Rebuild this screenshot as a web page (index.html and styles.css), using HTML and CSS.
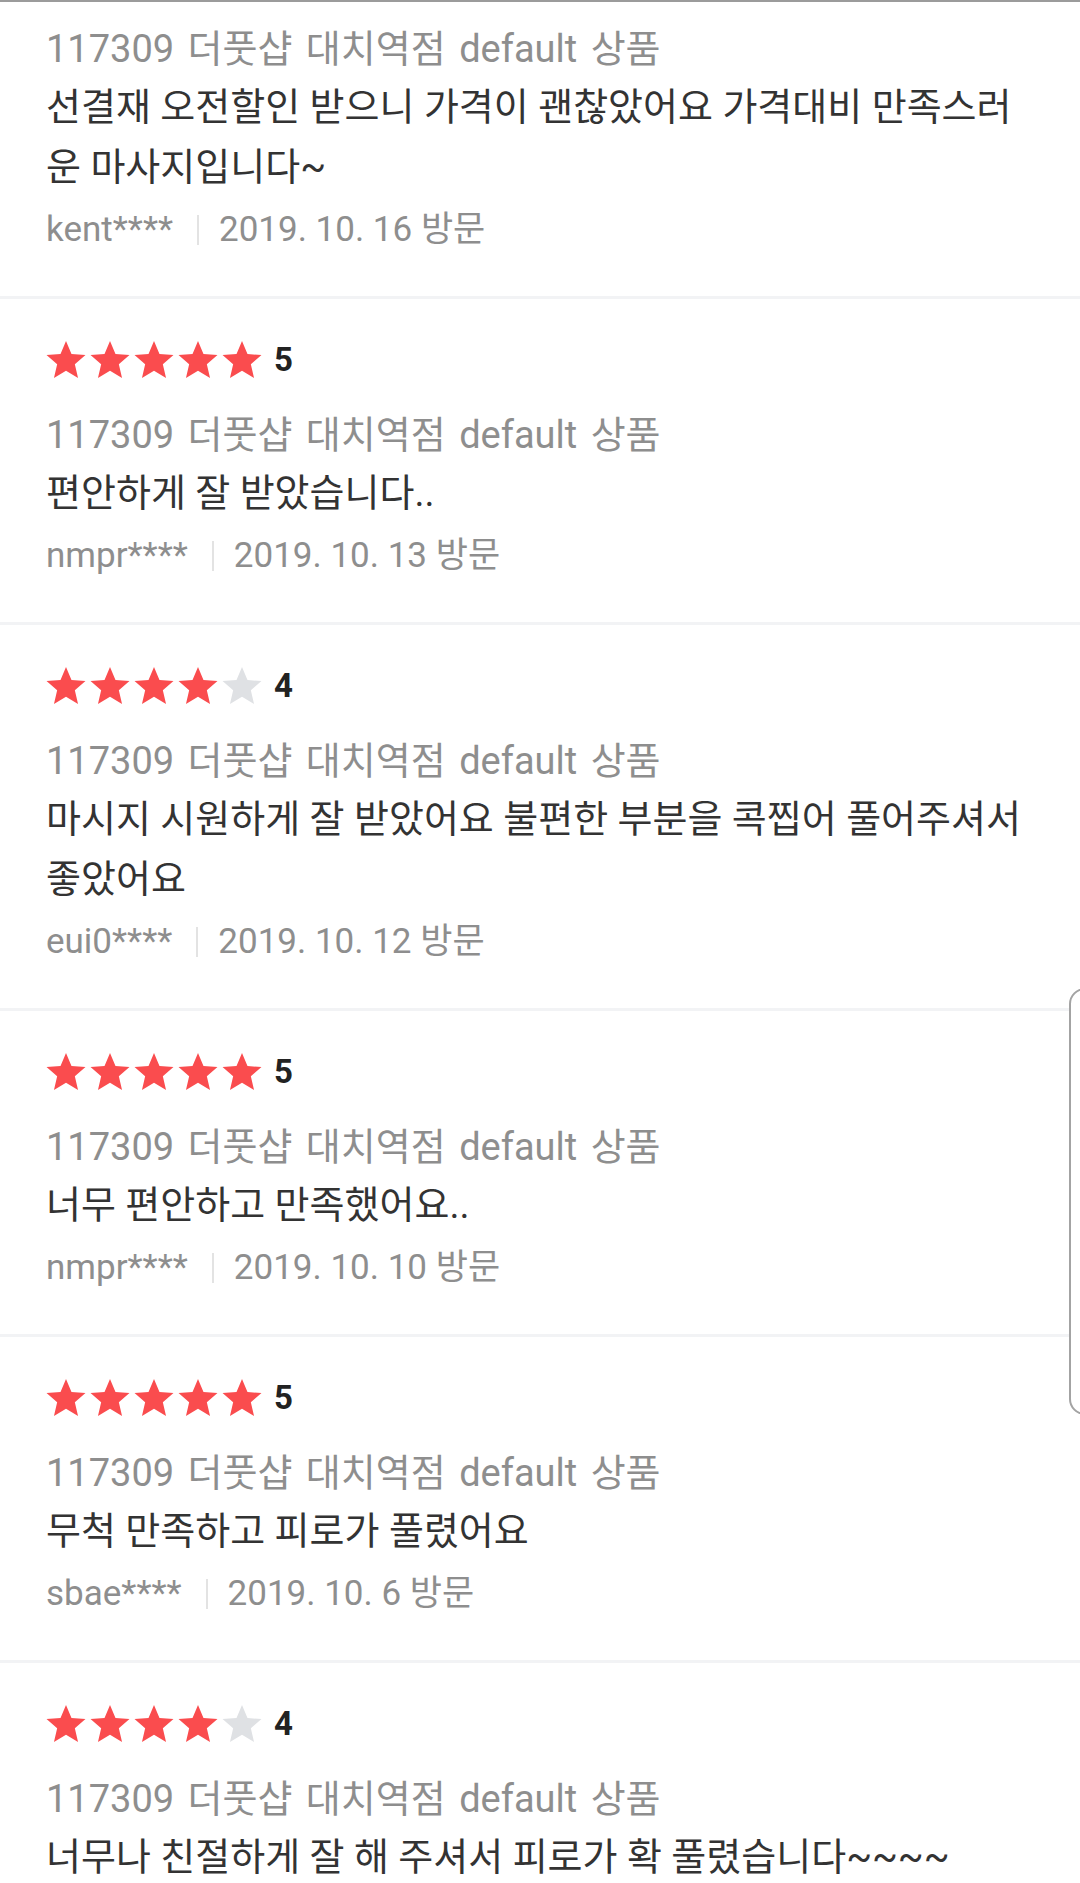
FILE: index.html
```html
<!DOCTYPE html>
<html lang="ko">

<head>
    <meta charset="UTF-8">
    <meta name="viewport" content="width=device-width, initial-scale=1.0">
    <title>방문자 리뷰</title>
    <link rel="stylesheet" href="styles.css">
</head>

<body>
    <svg class="defs" aria-hidden="true">
        <symbol id="star" viewBox="0 0 20 19">
            <path d="M10 15.27L16.18 19l-1.64-7.03L20 7.24l-7.19-.61L10 0 7.19 6.63 0 7.24l5.46 4.73L3.82 19z" />
        </symbol>
    </svg>

    <div class="topline"></div>

    <div class="reviews">
        <div class="review first">
            <p class="product">117309 더풋샵 대치역점 default 상품</p>
            <p class="text">선결재 오전할인 받으니 가격이 괜찮았어요 가격대비 만족스러운 마사지입니다~</p>
            <p class="meta"><span class="user">kent****</span><span class="date">2019. 10. 16 방문</span></p>
        </div>

        <div class="review">
            <div class="rating">
                <svg class="star on"><use href="#star" /></svg>
                <svg class="star on"><use href="#star" /></svg>
                <svg class="star on"><use href="#star" /></svg>
                <svg class="star on"><use href="#star" /></svg>
                <svg class="star on"><use href="#star" /></svg>
                <span class="score">5</span>
            </div>
            <p class="product">117309 더풋샵 대치역점 default 상품</p>
            <p class="text">편안하게 잘 받았습니다..</p>
            <p class="meta"><span class="user">nmpr****</span><span class="date">2019. 10. 13 방문</span></p>
        </div>

        <div class="review">
            <div class="rating">
                <svg class="star on"><use href="#star" /></svg>
                <svg class="star on"><use href="#star" /></svg>
                <svg class="star on"><use href="#star" /></svg>
                <svg class="star on"><use href="#star" /></svg>
                <svg class="star"><use href="#star" /></svg>
                <span class="score">4</span>
            </div>
            <p class="product">117309 더풋샵 대치역점 default 상품</p>
            <p class="text">마시지 시원하게 잘 받았어요 불편한 부분을 콕찝어 풀어주셔서 좋았어요</p>
            <p class="meta"><span class="user">eui0****</span><span class="date">2019. 10. 12 방문</span></p>
        </div>

        <div class="review">
            <div class="rating">
                <svg class="star on"><use href="#star" /></svg>
                <svg class="star on"><use href="#star" /></svg>
                <svg class="star on"><use href="#star" /></svg>
                <svg class="star on"><use href="#star" /></svg>
                <svg class="star on"><use href="#star" /></svg>
                <span class="score">5</span>
            </div>
            <p class="product">117309 더풋샵 대치역점 default 상품</p>
            <p class="text">너무 편안하고 만족했어요..</p>
            <p class="meta"><span class="user">nmpr****</span><span class="date">2019. 10. 10 방문</span></p>
        </div>

        <div class="review">
            <div class="rating">
                <svg class="star on"><use href="#star" /></svg>
                <svg class="star on"><use href="#star" /></svg>
                <svg class="star on"><use href="#star" /></svg>
                <svg class="star on"><use href="#star" /></svg>
                <svg class="star on"><use href="#star" /></svg>
                <span class="score">5</span>
            </div>
            <p class="product">117309 더풋샵 대치역점 default 상품</p>
            <p class="text">무척 만족하고 피로가 풀렸어요</p>
            <p class="meta"><span class="user">sbae****</span><span class="date">2019. 10. 6 방문</span></p>
        </div>

        <div class="review">
            <div class="rating">
                <svg class="star on"><use href="#star" /></svg>
                <svg class="star on"><use href="#star" /></svg>
                <svg class="star on"><use href="#star" /></svg>
                <svg class="star on"><use href="#star" /></svg>
                <svg class="star"><use href="#star" /></svg>
                <span class="score">4</span>
            </div>
            <p class="product">117309 더풋샵 대치역점 default 상품</p>
            <p class="text">너무나 친절하게 잘 해 주셔서 피로가 확 풀렸습니다~~~~</p>
        </div>
    </div>

    <div class="scroll-handle"></div>
</body>

</html>
```

FILE: styles.css
```css
html {
    overflow: hidden;
}

body {
    margin: 0;
    background-color: #fff;
    font-family: Roboto, "Noto Sans CJK KR", sans-serif;
    font-size: 38px;
    color: #333;
}

.defs {
    display: none;
}

.topline {
    height: 2px;
    background-color: #9b9b9b;
}

.review {
    padding: 40px 59px 39px 46px;
    border-bottom: 3px solid #f2f3f5;
}

.review.first {
    padding-top: 15px;
}

.review p {
    margin: 0;
    line-height: 60px;
}

.rating {
    display: flex;
    align-items: center;
    gap: 4px;
    height: 40px;
    margin-bottom: 24px;
}

.star {
    width: 40px;
    height: 37px;
    fill: #dfe1e4;
}

.star.on {
    fill: #fa4c4e;
}

.score {
    margin-left: 8px;
    font-size: 33px;
    font-weight: bold;
    color: #222;
}

.review .product {
    padding-top: 4px;
    line-height: 56px;
    word-spacing: 4px;
    color: #8e8e8e;
}

.text {
    color: #333;
}

.meta {
    display: flex;
    align-items: center;
    box-sizing: border-box;
    height: 60px;
    padding-top: 6px;
    color: #8e8e8e;
    font-size: 35px;
}

.user {
    padding-right: 24px;
    border-right: 2px solid #e3e3e3;
    line-height: 30px;
}

.date {
    padding-left: 20px;
}

.scroll-handle {
    position: fixed;
    left: 1069px;
    top: 988px;
    width: 40px;
    height: 423px;
    border: 2px solid #a3a3a3;
    border-radius: 16px;
    background-color: #fff;
}
```
